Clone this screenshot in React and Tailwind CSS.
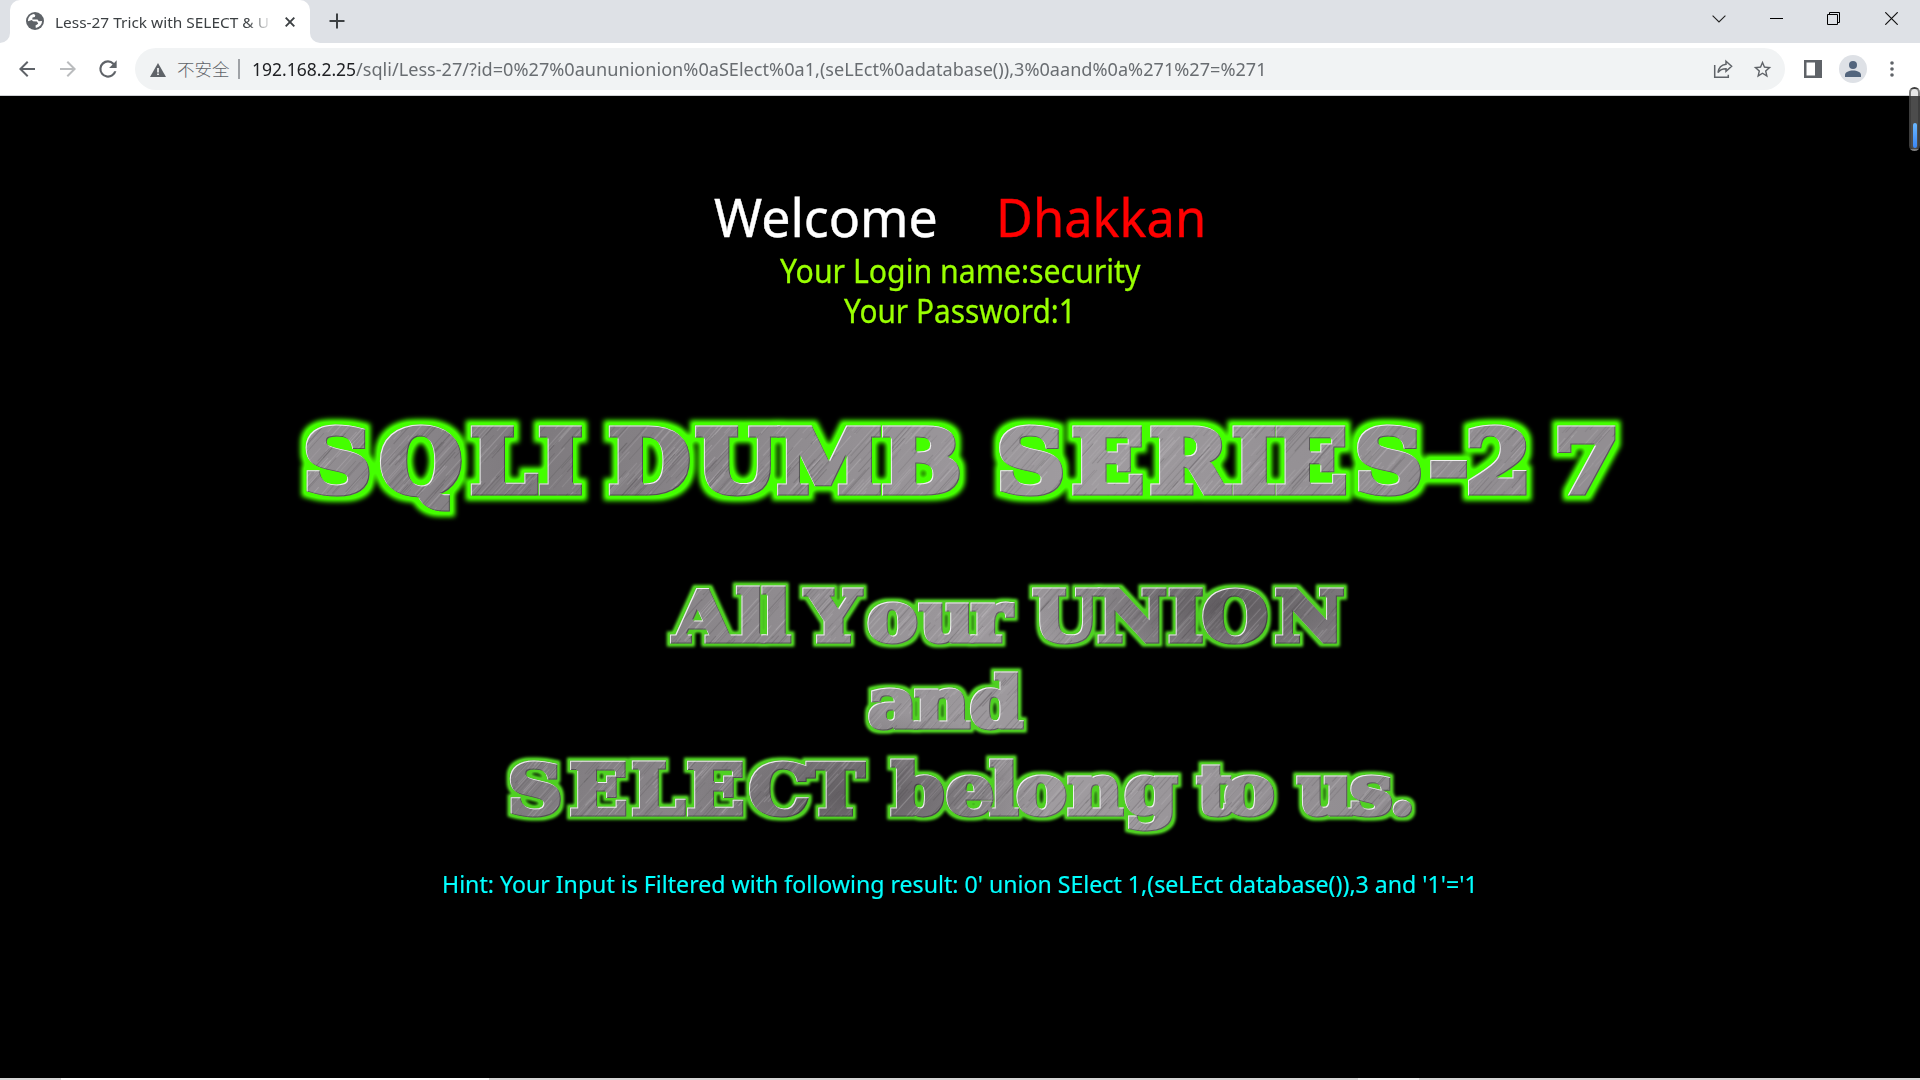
import React, { useLayoutEffect, useRef, useState } from "react";

const SANS = "font-['Noto_Sans','Noto_Sans_CJK_SC',sans-serif]";

/* Text stretched horizontally to an exact width. */
function Fit({ width, className = "", children }) {
  const ref = useRef(null);
  const [scale, setScale] = useState(1);
  useLayoutEffect(() => {
    const measure = () => setScale(width / ref.current.offsetWidth);
    measure();
    document.fonts.ready.then(measure);
  }, [width]);
  return (
    <span className={`block whitespace-pre ${className}`} style={{ width }}>
      <span ref={ref} className="inline-block origin-left" style={{ transform: `scaleX(${scale})` }}>
        {children}
      </span>
    </span>
  );
}

function TabStrip() {
  return (
    <div className="flex h-[43px] bg-[#dee1e6]">
      <div className="flex w-[10px] items-end bg-white">
        <div className="h-full w-full rounded-br-[10px] bg-[#dee1e6]" />
      </div>
      <div className="w-[300px] bg-[#dee1e6]">
        <div className="flex h-full items-center rounded-t-[10px] bg-white pl-4">
          <svg viewBox="0 0 18 18" className="-mt-px h-[18px] w-[18px]">
            <circle cx="9" cy="9" r="9" fill="#5f6368" />
            <path d="M2 9.200C2 5.200 4.600 2.400 8 2.100l1.300 1.200-.5 1.600-2.300.7-.2 1.800h5.200l1.300 1.900 3.200-.3c0 3.400-2.400 6.300-6.200 6.900l-.3-2.500 2.700-1.600-1.200-2.200-3.900-.3-1.300-1.300z" fill="#fff" />
          </svg>
          <div className="ml-[11px] w-[218px] [mask-image:linear-gradient(to_right,black_88%,transparent_100%)]">
            <Fit width={214} className="text-[15px] leading-[20px] text-[#3c4043]">Less-27 Trick with SELECT &amp; U</Fit>
          </div>
          <svg viewBox="0 0 10 10" className="ml-[12px] h-[10px] w-[10px]">
            <path d="M.7.7l8.600 8.600M9.300.7L.7 9.300" stroke="#3c4043" strokeWidth="1.900" />
          </svg>
        </div>
      </div>
      <div className="w-[10px] bg-white">
        <div className="h-full w-full rounded-bl-[10px] bg-[#dee1e6]" />
      </div>
      <svg viewBox="0 0 16 16" className="ml-[9px] mt-[13px] h-4 w-4">
        <path d="M8 .5v15M.5 8h15" stroke="#3c4043" strokeWidth="2" />
      </svg>
      <div className="ml-auto mt-[11px] flex h-[15px] items-center">
        <svg viewBox="0 0 14 8" className="mr-11 h-2 w-[14px]"><path d="M.6.6L7 7 13.400.6" fill="none" stroke="#222" strokeWidth="1.100" /></svg>
        <svg viewBox="0 0 13 13" className="mr-11 h-[13px] w-[13px]"><path d="M0 6.500h13" stroke="#000" /></svg>
        <svg viewBox="0 0 13 13" className="mr-[45px] h-[13px] w-[13px]"><path d="M.5 2.500h10v10h-10zM2.500 2.500v-2h10v10h-2" fill="none" stroke="#000" /></svg>
        <svg viewBox="0 0 13 13" className="mr-[22px] h-[13px] w-[13px]"><path d="M.3.3l12.400 12.400M12.700.3L.3 12.700" stroke="#111" strokeWidth="1.200" /></svg>
      </div>
    </div>
  );
}

function Toolbar() {
  return (
    <div className="flex h-[53px] items-center border-b border-[#cfd1d4] bg-white">
      <svg viewBox="0 0 24 24" className="ml-[15px] h-6 w-6" fill="#5f6368"><path d="M20 11H7.830l5.590-5.590L12 4l-8 8 8 8 1.410-1.410L7.830 13H20v-2z" /></svg>
      <svg viewBox="0 0 24 24" className="ml-[17px] h-6 w-6" fill="#babcbe"><path d="M12 4l-1.410 1.410L16.170 11H4v2h12.170l-5.580 5.590L12 20l8-8z" /></svg>
      <svg viewBox="0 0 24 24" className="ml-[15px] h-[26px] w-[26px]" fill="#5f6368"><path d="M17.650 6.350A7.960 7.960 0 0 0 12 4a8 8 0 1 0 7.730 10h-2.080A6 6 0 1 1 12 6c1.660 0 3.140.69 4.220 1.780L13 11h7V4z" /></svg>
      <div className="ml-[14px] flex h-[42px] w-[1650px] items-center rounded-full bg-[#f1f3f4]">
        <svg viewBox="0 0 16 14" className="ml-[15px] mt-0.5 h-[14px] w-4"><path d="M8 0l8 14H0z" fill="#5f6368" /><path d="M7.200 5h1.600v4.400H7.200zM7.200 10.500h1.600V12H7.200z" fill="#fff" /></svg>
        <span className="ml-[11px] w-[54px] whitespace-nowrap font-['Noto_Sans_CJK_SC',sans-serif] text-[17.500px] font-light leading-none text-[#5f6368]">不安全</span>
        <div className="ml-[7px] h-5 w-[2px] bg-[#9fa2a6]" />
        <div className="ml-[12px] flex text-[18.500px] leading-[24px]">
          <Fit width={104} className="text-[#202124]">192.168.2.25</Fit>
          <Fit width={911} className="text-[#696d71]">/sqli/Less-27/?id=0%27%0aununionion%0aSElect%0a1,(seLEct%0adatabase()),3%0aand%0a%271%27=%271</Fit>
        </div>
        <svg viewBox="0 0 20 20" className="ml-auto mr-[19px] h-5 w-5" fill="none" stroke="#5f6368" strokeWidth="1.500"><path d="M1.700 6v12.300h13.600v-2.500" /><path d="M13 2.300l5.600 5-5.600 5V9.700c-3.600 0-6 1-8 3.800.6-4.500 3.200-7.500 8-8.200z" /></svg>
        <svg viewBox="0 0 24 24" className="mr-[12px] h-[21px] w-[21px]" fill="#5f6368"><path d="M22 9.240l-7.190-.62L12 2 9.190 8.630 2 9.240l5.460 4.730L5.820 21 12 17.270 18.180 21l-1.630-7.030zM12 15.400l-3.760 2.270 1-4.280-3.320-2.880 4.380-.38L12 6.100l1.710 4.040 4.380.38-3.320 2.880 1 4.280z" /></svg>
      </div>
      <svg viewBox="0 0 18 18" className="ml-[19px] h-[18px] w-[18px]"><path d="M0 0h18v18H0zM2.500 2.500v13H11v-13z" fill="#5f6368" fillRule="evenodd" /></svg>
      <svg viewBox="0 0 28 28" className="ml-[17px] h-7 w-7"><circle cx="14" cy="14" r="14" fill="#dee1e6" /><circle cx="14" cy="10" r="4" fill="#53657d" /><path d="M6 22v-2c0-3 4-4.500 8-4.500s8 1.500 8 4.500v2z" fill="#53657d" /></svg>
      <svg viewBox="0 0 4 16" className="ml-[23px] h-4 w-1" fill="#5f6368"><circle cx="2" cy="2" r="1.800" /><circle cx="2" cy="8" r="1.800" /><circle cx="2" cy="14" r="1.800" /></svg>
    </div>
  );
}

/* Diagonal scratches of the brushed-metal fill. */
const scratches = (() => {
  let s = 7;
  const rnd = () => ((s = (s * 16807) % 2147483647) / 2147483647);
  return Array.from({ length: 6000 }, () => {
    const x = 240 + rnd() * 1400;
    const y = rnd() * 520;
    const l = 12 + rnd() * 34;
    return { d: `M${x.toFixed(1)} ${y.toFixed(1)}l${(l * 0.9).toFixed(1)} ${(-l).toFixed(1)}`, light: rnd() > 0.5, o: 0.08 + rnd() * 0.2 };
  });
})();

/* Glyphs are widened by this factor; x positions are divided by it. */
const STRETCH = 1.09;
const at = (origin, k, list) => list.map((v) => ((origin + v / k - 0.8) / STRETCH).toFixed(1)).join(" ");

const words = [
  { t: "SQLI", big: true, y: 96.500, x: at(280, 2.24, [54, 225, 428, 580]) },
  { t: "DUMB", big: true, y: 96.500, x: at(280, 2.24, [737, 933, 1115, 1349]) },
  { t: "SERIES-2", big: true, y: 96.500, x: at(960, 2.24, [84, 252, 427, 611, 708, 886, 1052, 1134]) },
  { t: "7", big: true, y: 96.500, x: at(960, 2.24, [1332]) },
  { t: "All", y: 245.500, x: at(640, 2.119, [72, 205, 259]) },
  { t: "Your", y: 245.500, x: at(640, 2.119, [353, 483, 593, 703]) },
  { t: "UNION", y: 245.500, x: at(640, 2.119, [833, 970, 1120, 1192, 1346]) },
  { t: "and", y: 331.500, x: at(640, 2.119, [484, 583, 700]) },
  { t: "SELECT", y: 418, x: at(480, 1.6333, [46, 147, 248, 338, 440, 536]) },
  { t: "belong", y: 418, x: at(480, 1.6333, [673, 762, 833, 877, 961, 1053]) },
  { t: "to", y: 418, x: at(480, 1.6333, [1172, 1216]) },
  { t: "us.", y: 418, x: at(480, 1.6333, [1336, 1422, 1486]) },
];

function MetalFilter({ id, r, blur, color }) {
  return (
    <filter id={id} filterUnits="userSpaceOnUse" x="240" y="0" width="1440" height="480" colorInterpolationFilters="sRGB">
      <feMorphology in="SourceAlpha" operator="dilate" radius={r} result="fat" />
      <feGaussianBlur in="fat" stdDeviation={blur} result="soft" />
      <feComponentTransfer in="soft" result="boost"><feFuncA type="linear" slope="1.200" /></feComponentTransfer>
      <feFlood floodColor={color} />
      <feComposite in2="boost" operator="in" result="glow" />
      <feOffset in="SourceAlpha" dx="1.300" dy="1.300" result="o1" />
      <feFlood floodColor="#fff" floodOpacity="0.850" />
      <feComposite in2="SourceAlpha" operator="in" />
      <feComposite in2="o1" operator="out" result="hi" />
      <feOffset in="SourceAlpha" dx="-1.200" dy="-1.200" result="o2" />
      <feFlood floodColor="#222" floodOpacity="0.500" />
      <feComposite in2="SourceAlpha" operator="in" />
      <feComposite in2="o2" operator="out" result="lo" />
      <feMerge>
        <feMergeNode in="glow" /><feMergeNode in="SourceGraphic" /><feMergeNode in="lo" /><feMergeNode in="hi" />
      </feMerge>
    </filter>
  );
}

function Banner() {
  const draw = (list, size) =>
    list.map((w) => (
      <text key={w.t} x={w.x} y={w.y} className={size}>{w.t}</text>
    ));
  return (
    <svg viewBox="260 0 1400 480" className="block h-[480px] w-[1400px] font-['DejaVu_Serif',serif] font-bold">
      <defs>
        <linearGradient id="sheen" gradientUnits="userSpaceOnUse" x1="280" y1="0" x2="1540" y2="120">
          <stop offset="0" stopColor="#969296" /><stop offset="0.200" stopColor="#7e7a7e" />
          <stop offset="0.300" stopColor="#858185" /><stop offset="0.500" stopColor="#989498" />
          <stop offset="0.650" stopColor="#a09ca0" /><stop offset="0.780" stopColor="#969296" />
          <stop offset="0.900" stopColor="#918d91" /><stop offset="1" stopColor="#928e92" />
        </linearGradient>
        <radialGradient id="shade">
          <stop offset="0" stopColor="#4a464a" stopOpacity="0.750" /><stop offset="1" stopColor="#4a464a" stopOpacity="0" />
        </radialGradient>
        <pattern id="metal" patternUnits="userSpaceOnUse" x="0" y="0" width="1920" height="520">
          <g transform={`scale(${1 / STRETCH} 1)`}>
            <rect x="0" y="0" width="1920" height="520" fill="url(#sheen)" />
            <ellipse cx="1230" cy="210" rx="210" ry="80" fill="url(#shade)" />
            <ellipse cx="860" cy="400" rx="190" ry="85" fill="url(#shade)" />
            {scratches.map((s, i) => (
              <path key={i} d={s.d} stroke={s.light ? "#d0ccd0" : "#444044"} strokeOpacity={s.o} strokeWidth="1" />
            ))}
          </g>
        </pattern>
        <MetalFilter id="glowBig" r="5" blur="2.600" color="#44ff00" />
        <MetalFilter id="glowSmall" r="3" blur="1.700" color="#4fd022" />
      </defs>
      <g filter="url(#glowBig)">
        <g transform={`scale(${STRETCH} 1)`} fill="url(#metal)" stroke="url(#metal)" strokeWidth="7">
          {draw(words.filter((w) => w.big), "text-[86.500px]")}
        </g>
      </g>
      <g filter="url(#glowSmall)">
        <g transform={`scale(${STRETCH} 1)`} fill="url(#metal)" stroke="url(#metal)" strokeWidth="5">
          {draw(words.filter((w) => !w.big), "text-[70px]")}
        </g>
      </g>
    </svg>
  );
}

export default function App() {
  return (
    <div className={`flex h-[1080px] w-[1920px] flex-col overflow-hidden bg-black ${SANS}`}>
      <TabStrip />
      <Toolbar />
      <main className="relative flex flex-1 flex-col items-center bg-black">
        <div className="absolute right-0 top-[-9px] flex h-16 w-[11px] items-end justify-center rounded-full border-2 border-[#33333399] bg-gradient-to-b from-[#e8e8e8] from-[7px] to-[#4c4c4c] to-[7px] pb-px">
          <div className="h-[25px] w-1 rounded-full bg-gradient-to-b from-[#6bb8ff] to-[#3a86f5]" />
        </div>
        <h1 className="mt-[85px] flex h-[70px] text-[53px] leading-[72px] [-webkit-text-stroke:0.4px]">
          <Fit width={224} className="-ml-px text-white">Welcome</Fit>
          <Fit width={210} className="ml-[58px] text-[#ff0000]">Dhakkan</Fit>
        </h1>
        <div className="flex flex-col items-center text-[32px] leading-[40px] text-[#99ff00] [-webkit-text-stroke:0.3px]">
          <Fit width={360}>Your Login name:security</Fit>
          <Fit width={232}>Your Password:1</Fit>
        </div>
        <div className="mt-[65px]"><Banner /></div>
        <Fit width={1036} className="-mt-[9px] text-[24px] leading-[34px] text-[#00ffff] [-webkit-text-stroke:0.2px]">
          {"Hint: Your Input is Filtered with following result: 0' union SElect 1,(seLEct database()),3 and '1'='1"}
        </Fit>
      </main>
      <div className="flex h-0.5 bg-[#d6d6d6]">
        <div className="ml-[61px] w-[428px] bg-white" />
        <div className="ml-[869px] w-[61px] bg-[#f0f0f0]" />
      </div>
    </div>
  );
}
